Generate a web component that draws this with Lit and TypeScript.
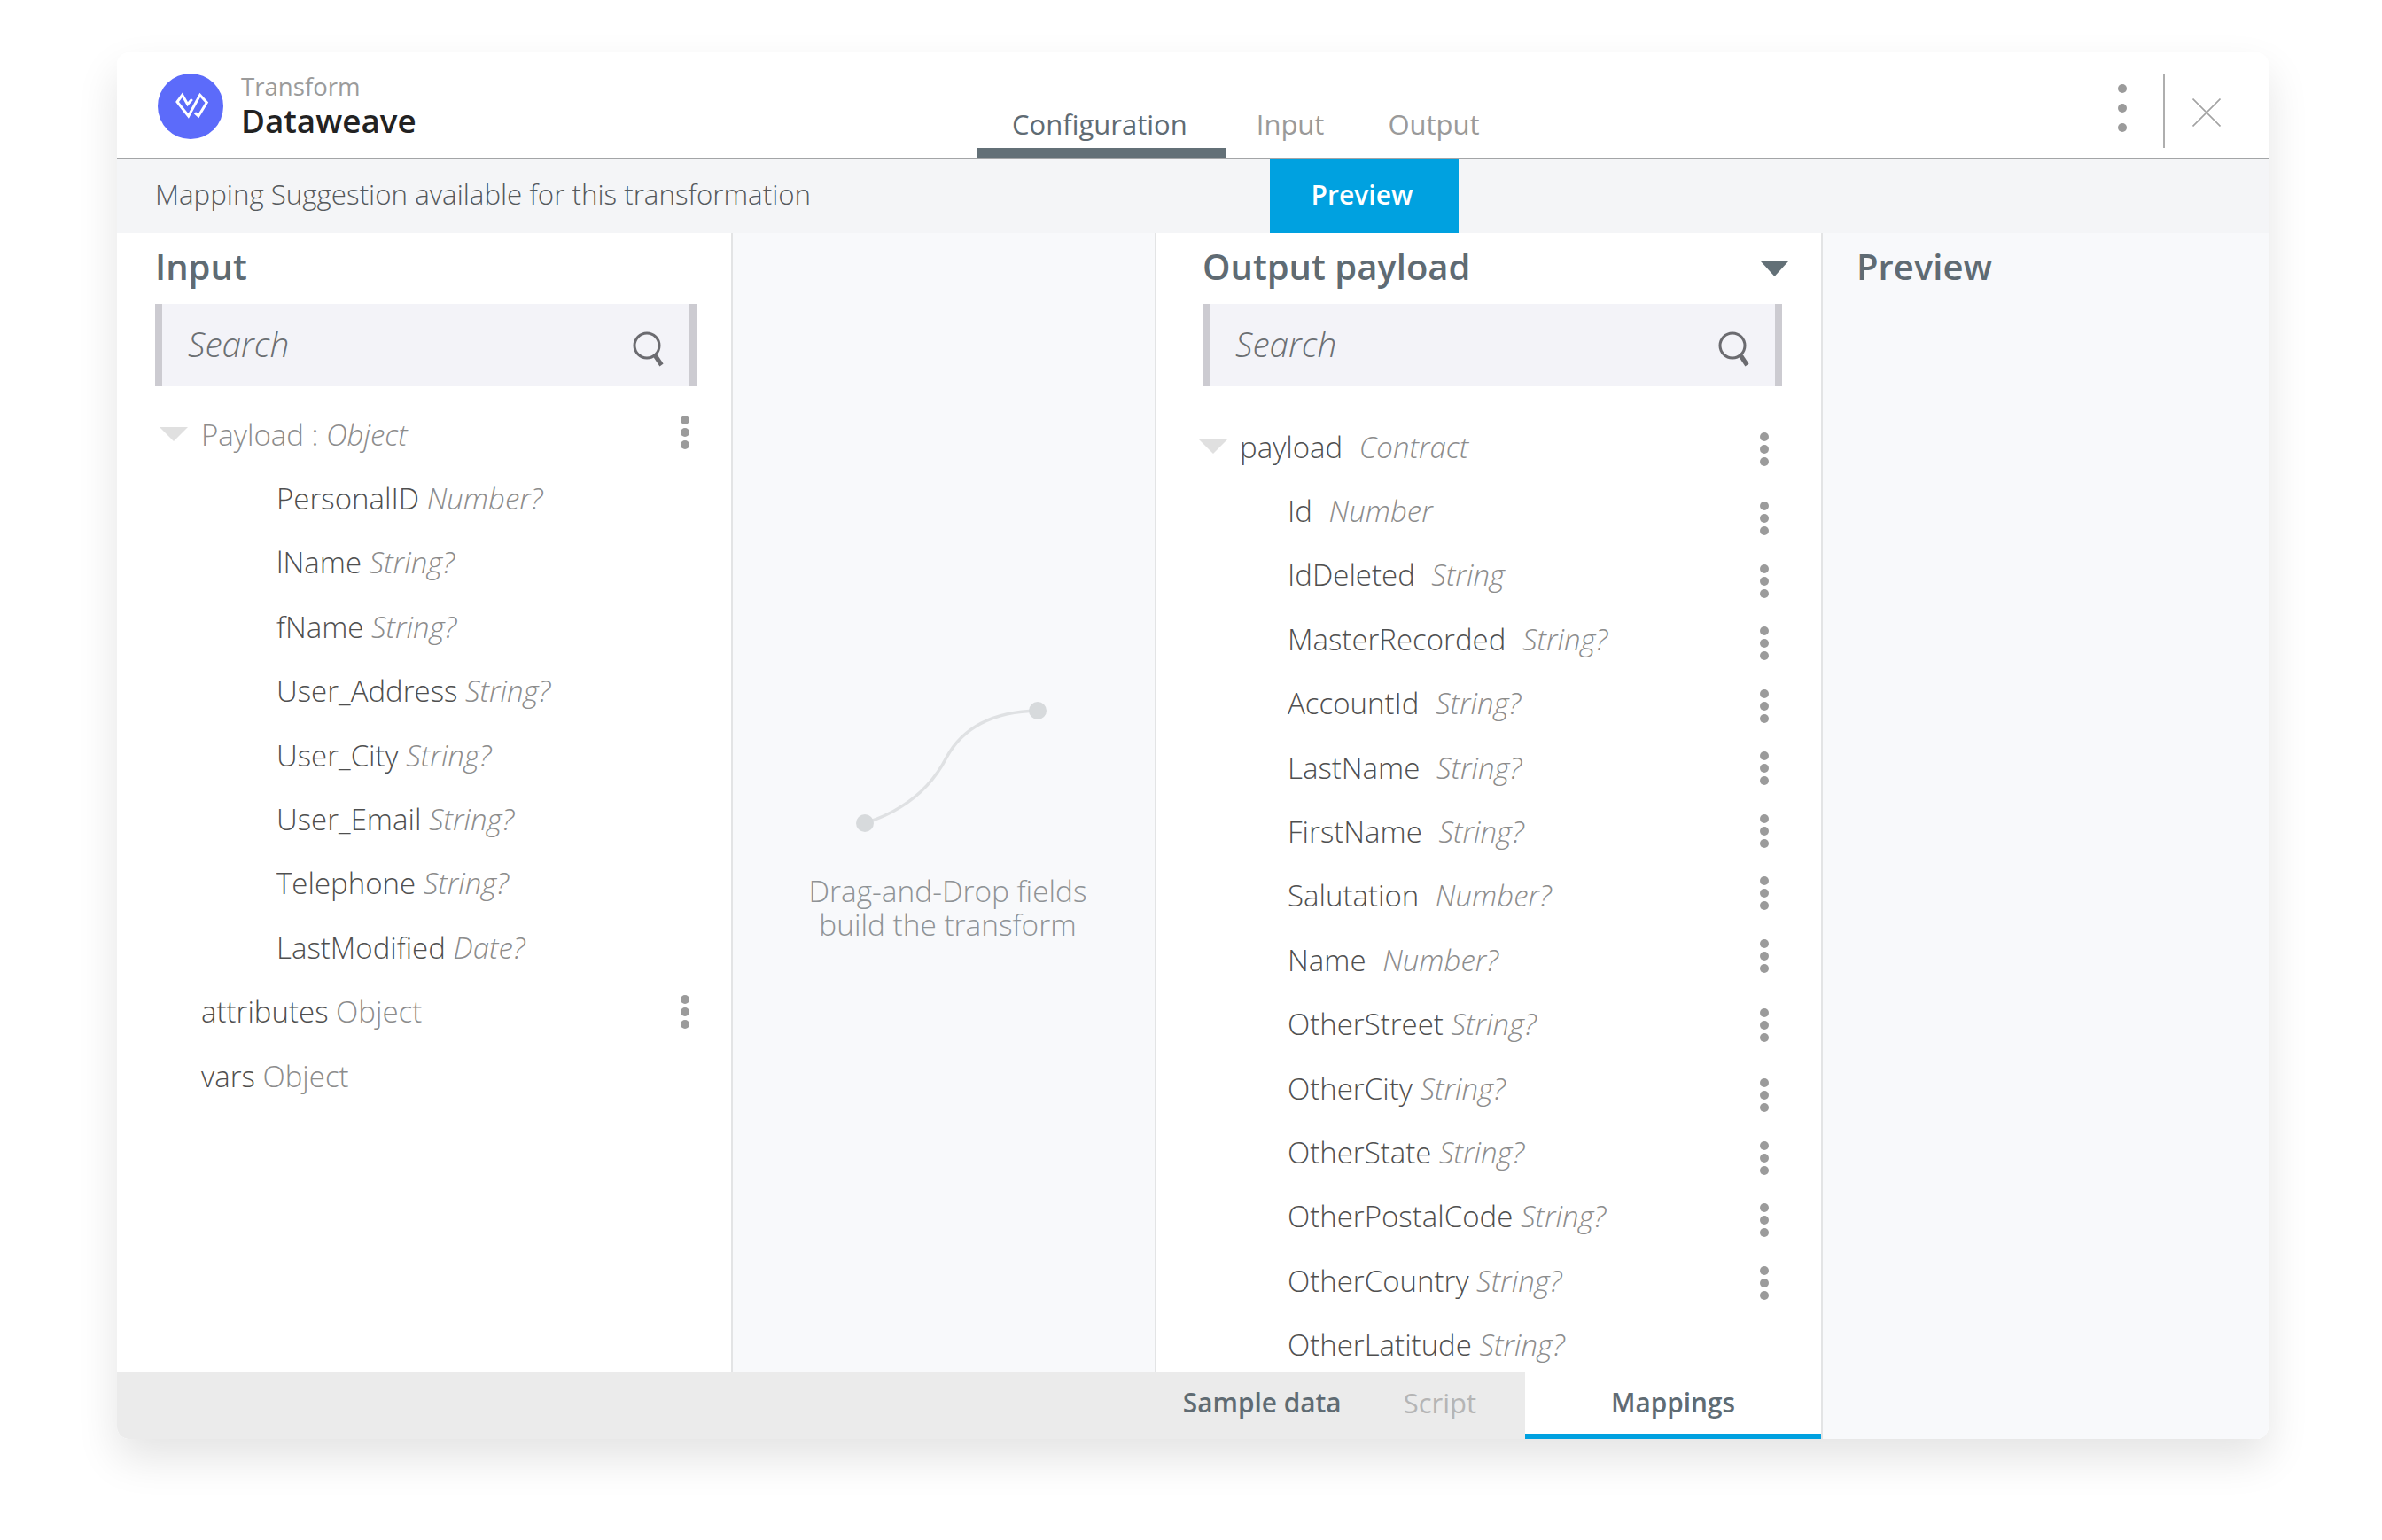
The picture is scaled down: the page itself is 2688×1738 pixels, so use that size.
import { LitElement, html, css, svg } from "lit";
import { customElement } from "lit/decorators.js";

const inputChildren: [string, string][] = [
  ["PersonalID", "Number?"],
  ["lName", "String?"],
  ["fName", "String?"],
  ["User_Address", "String?"],
  ["User_City", "String?"],
  ["User_Email", "String?"],
  ["Telephone", "String?"],
  ["LastModified", "Date?"],
];

const outputRows: [string, string, boolean][] = [
  ["Id", "Number", true],
  ["IdDeleted", "String", true],
  ["MasterRecorded", "String?", true],
  ["AccountId", "String?", true],
  ["LastName", "String?", true],
  ["FirstName", "String?", true],
  ["Salutation", "Number?", true],
  ["Name", "Number?", true],
  ["OtherStreet", "String?", false],
  ["OtherCity", "String?", false],
  ["OtherState", "String?", false],
  ["OtherPostalCode", "String?", false],
  ["OtherCountry", "String?", false],
  ["OtherLatitude", "String?", false],
];

// vertical centres of the output column's action handles, relative to the tree's top
const kebabCentres = [38.7, 117.3, 188.2, 258.4, 328.6, 399.4, 470.3, 540.5, 610.7, 689.3, 767.9, 838.7, 908.9, 979.8];
const KEBAB_H = 38;

const searchIcon = svg`<circle cx="17" cy="17" r="14" fill="none" stroke="#6b6b70" stroke-width="3"/><path d="M26.5 28.5 L33.5 39" stroke="#6b6b70" stroke-width="5" fill="none"/>`;

@customElement("app-root")
export class AppRoot extends LitElement {
  static styles = css`
    :host {
      display: block;
      width: 2688px;
      height: 1738px;
      box-sizing: border-box;
      padding: 59px 128px 114px 132px;
      background: #fff;
      font-family: "Open Sans", "Liberation Sans", sans-serif;
    }
    .card {
      width: 2428px;
      height: 1565px;
      display: flex;
      flex-direction: column;
      background: #fff;
      border-radius: 14px;
      overflow: hidden;
    }
    .shadow {
      border-radius: 14px;
      box-shadow: 0 22px 48px rgba(0, 0, 0, 0.11);
      width: 2428px;
      height: 1565px;
    }
    .header {
      flex: 0 0 121px;
      box-sizing: border-box;
      border-bottom: 2px solid #a3a5a7;
      display: flex;
    }
    .brand {
      flex: 0 0 971px;
      box-sizing: border-box;
      padding: 24px 0 0 46px;
      display: flex;
      gap: 20px;
    }
    .logo {
      width: 74px;
      height: 74px;
      display: block;
    }
    .titles {
      display: flex;
      flex-direction: column;
    }
    .kicker {
      font-size: 27.6px;
      line-height: 36px;
      color: #9b9b9b;
      margin-top: -4px;
    }
    .title {
      font-size: 36.8px;
      line-height: 43px;
      font-weight: 600;
      color: #222;
    }
    .tabs {
      display: flex;
      align-items: flex-end;
    }
    .tab {
      font-size: 31px;
      line-height: 40px;
      color: #9a9a9a;
      padding: 0 37px 18px 35px;
    }
    .tab.active {
      color: #5f6b73;
      padding: 0 43px 7px 39px;
      border-bottom: 11px solid #637077;
    }
    .actions {
      margin-left: auto;
      display: flex;
      align-items: flex-start;
    }
    .head-kebab {
      margin: 36px 41px 0 0;
      display: flex;
      flex-direction: column;
      gap: 12px;
    }
    .head-kebab i {
      width: 10px;
      height: 10px;
      border-radius: 50%;
      background: #9b9b9b;
    }
    .close {
      margin-top: 25px;
      height: 83px;
      border-left: 2px solid #aeaeae;
      padding: 27px 54px 0 31px;
      box-sizing: border-box;
    }
    .close svg {
      display: block;
    }
    .suggest {
      flex: 0 0 83px;
      background: #f4f5f7;
      display: flex;
      align-items: stretch;
      padding-left: 43px;
    }
    .suggest .msg {
      flex: 0 0 1258px;
      font-size: 31.3px;
      line-height: 79px;
      font-weight: 300;
      color: #55595c;
    }
    .suggest .btn {
      flex: 0 0 213px;
      box-sizing: border-box;
      padding-right: 5px;
      background: #00a1e0;
      color: #fff;
      font-size: 30px;
      font-weight: 600;
      line-height: 79px;
      text-align: center;
    }
    .content {
      flex: 1;
      min-height: 0;
      display: flex;
    }
    .workspace {
      flex: 0 0 1925px;
      box-sizing: border-box;
      border-right: 2px solid #e3e4e5;
      display: flex;
      flex-direction: column;
      min-height: 0;
    }
    .columns {
      flex: 1;
      min-height: 0;
      display: flex;
      overflow: hidden;
    }
    .col {
      box-sizing: border-box;
      overflow: hidden;
    }
    .col-in {
      flex: 0 0 695px;
      padding-left: 43px;
      border-right: 2px solid #e3e4e5;
    }
    .col-mid {
      flex: 0 0 478px;
      background: #f8f9fb;
      border-right: 2px solid #e3e4e5;
      padding: 522px 0 0 9px;
      display: flex;
      flex-direction: column;
      align-items: center;
    }
    .col-out {
      flex: 1;
      padding-left: 52px;
    }
    .preview {
      flex: 1;
      background: #f8f9fb;
      padding-left: 38px;
    }
    .heading {
      height: 76px;
      margin-bottom: 4px;
      display: flex;
      align-items: center;
      font-size: 40px;
      font-weight: 600;
      color: #5f6b73;
      line-height: 76px;
    }
    .heading.out {
      width: 661px;
      justify-content: space-between;
    }
    .heading svg {
      margin-top: 4px;
    }
    .search {
      height: 93px;
      box-sizing: border-box;
      background: #f3f3f8;
      border-left: 8px solid #cccbd1;
      border-right: 8px solid #cccbd1;
      display: flex;
      align-items: center;
      justify-content: space-between;
      font-size: 38.8px;
      font-style: italic;
      font-weight: 300;
      color: #6b6f73;
      line-height: 88px;
    }
    .search.in {
      width: 611px;
      padding: 0 27px 0 29px;
    }
    .search.out {
      width: 654px;
      padding: 0 27px 0 29px;
    }
    .search span {
      margin-bottom: 4px;
    }
    .search svg {
      display: block;
      margin-top: 8px;
    }
    .tree {
      margin-top: 18px;
      width: 611px;
    }
    .row {
      height: 72.4px;
      display: flex;
      align-items: center;
      font-size: 33px;
      font-weight: 300;
      color: #4f4f4f;
      white-space: pre;
    }
    .row .t {
      font-style: italic;
      color: #8c8c8c;
    }
    .row .p {
      color: #8c8c8c;
    }
    .row.top {
      color: #8c8c8c;
    }
    .tree .row {
      padding-left: 52px;
    }
    .tree .row.child {
      padding-left: 137px;
    }
    .tree .row.top {
      padding-left: 5px;
    }
    .tri {
      display: block;
      margin-right: 15px;
      width: 32px;
      height: 16px;
    }
    .row .kebab {
      margin-left: auto;
      margin-right: 8px;
    }
    .row.top .kebab {
      margin-bottom: 4px;
    }
    .kebab {
      width: 10px;
      flex: none;
      display: flex;
      flex-direction: column;
      gap: 4px;
    }
    .kebab i {
      width: 10px;
      height: 10px;
      border-radius: 50%;
      background: #9b9b9b;
    }
    .out-tree {
      margin-top: 32px;
      display: flex;
      width: 661px;
      align-items: flex-start;
      justify-content: space-between;
    }
    .out-list .row {
      padding-left: 96px;
    }
    .out-list .row.top {
      padding-left: 0;
      margin-left: -4px;
      color: #4f4f4f;
    }
    .out-list .row.top .tri {
      margin-right: 14px;
    }
    .out-list .row .t.wide {
      margin-left: 10px;
    }
    .kebabs {
      display: flex;
      flex-direction: column;
      margin-right: 22px;
    }
    .hint {
      font-size: 33.4px;
      line-height: 38px;
      font-weight: 300;
      color: #8f9396;
      text-align: center;
      margin-top: 41px;
    }
    .curve {
      display: block;
    }
    .bottom {
      flex: 0 0 73px;
      display: flex;
    }
    .bottom .gray {
      flex: 1;
      background: #ebebeb;
      display: flex;
      justify-content: flex-end;
      gap: 70px;
      padding-right: 55px;
      font-size: 29.8px;
      line-height: 70px;
      font-weight: 600;
      color: #5f6b73;
    }
    .bottom .dim {
      color: #b5b5b5;
      font-weight: 400;
      font-size: 31px;
    }
    .bottom .map {
      flex: 0 0 334px;
      box-sizing: border-box;
      background: #fff;
      border-bottom: 6px solid #00a1e0;
      font-size: 29.8px;
      line-height: 70px;
      font-weight: 600;
      color: #5f6b73;
      text-align: center;
    }
  `;

  private kebab(style = "") {
    return html`<div class="kebab" style=${style}><i></i><i></i><i></i></div>`;
  }

  private tri() {
    return html`<svg class="tri" viewBox="0 0 32 16"><path d="M0 0 H32 L16 16 Z" fill="#e0e0e0"/></svg>`;
  }

  private kebabColumn() {
    let prevEnd = 0;
    return kebabCentres.map((c) => {
      const top = c - KEBAB_H / 2;
      const m = top - prevEnd;
      prevEnd = top + KEBAB_H;
      return this.kebab(`margin-top:${m.toFixed(1)}px`);
    });
  }

  render() {
    return html`
      <div class="shadow">
        <div class="card">
          <div class="header">
            <div class="brand">
              <svg class="logo" viewBox="178 83 74 74">
                <circle cx="215" cy="120" r="37" fill="#5c6bfa"/>
                <path d="M216.7 112 L211.7 117.7 L205.7 107.3 L200 115 L212.7 131 L225.7 107.3 L233.3 115.7 L224 131 L220 127.3" fill="none" stroke="#fff" stroke-width="3"/>
              </svg>
              <div class="titles">
                <div class="kicker">Transform</div>
                <div class="title">Dataweave</div>
              </div>
            </div>
            <div class="tabs">
              <div class="tab active">Configuration</div>
              <div class="tab">Input</div>
              <div class="tab">Output</div>
            </div>
            <div class="actions">
              <div class="head-kebab"><i></i><i></i><i></i></div>
              <div class="close">
                <svg width="32" height="32" viewBox="0 0 32 32"><path d="M0.5 0.5 L31.5 31.5 M31.5 0.5 L0.5 31.5" stroke="#a3a3a3" stroke-width="1.6" fill="none"/></svg>
              </div>
            </div>
          </div>
          <div class="suggest">
            <div class="msg">Mapping Suggestion available for this transformation</div>
            <div class="btn">Preview</div>
          </div>
          <div class="content">
            <div class="workspace">
              <div class="columns">
                <div class="col col-in">
                  <div class="heading">Input</div>
                  <div class="search in">
                    <span>Search</span>
                    <svg width="38" height="42" viewBox="0 0 38 42">${searchIcon}</svg>
                  </div>
                  <div class="tree">
                    <div class="row top">${this.tri()}<span>Payload : <span class="t">Object</span></span>${this.kebab()}</div>
                    ${inputChildren.map(
                      ([n, t]) => html`<div class="row child"><span>${n} <span class="t">${t}</span></span></div>`
                    )}
                    <div class="row"><span>attributes <span class="p">Object</span></span>${this.kebab()}</div>
                    <div class="row"><span>vars <span class="p">Object</span></span></div>
                  </div>
                </div>
                <div class="col col-mid">
                  <svg class="curve" width="231" height="160" viewBox="954 785 231 160">
                    <path d="M976 929 C1020 915 1050 890 1068 855 C1088 818 1125 803 1171 802" fill="none" stroke="#dfe1e3" stroke-width="3.5"/>
                    <circle cx="976" cy="929" r="10" fill="#d7dadc"/>
                    <circle cx="1171" cy="802" r="10" fill="#d7dadc"/>
                  </svg>
                  <div class="hint">Drag-and-Drop fields<br />build the transform</div>
                </div>
                <div class="col col-out">
                  <div class="heading out">
                    <span>Output payload</span>
                    <svg width="31" height="17" viewBox="0 0 31 17"><path d="M0 0 H31 L15.5 17 Z" fill="#637077"/></svg>
                  </div>
                  <div class="search out">
                    <span>Search</span>
                    <svg width="38" height="42" viewBox="0 0 38 42">${searchIcon}</svg>
                  </div>
                  <div class="out-tree">
                    <div class="out-list">
                      <div class="row top">${this.tri()}<span>payload <span class="t wide">Contract</span></span></div>
                      ${outputRows.map(
                        ([n, t, wide]) =>
                          html`<div class="row"><span>${n} <span class="t ${wide ? "wide" : ""}">${t}</span></span></div>`
                      )}
                    </div>
                    <div class="kebabs">${this.kebabColumn()}</div>
                  </div>
                </div>
              </div>
              <div class="bottom">
                <div class="gray">
                  <span>Sample data</span>
                  <span class="dim">Script</span>
                </div>
                <div class="map">Mappings</div>
              </div>
            </div>
            <div class="preview">
              <div class="heading">Preview</div>
            </div>
          </div>
        </div>
      </div>
    `;
  }
}
